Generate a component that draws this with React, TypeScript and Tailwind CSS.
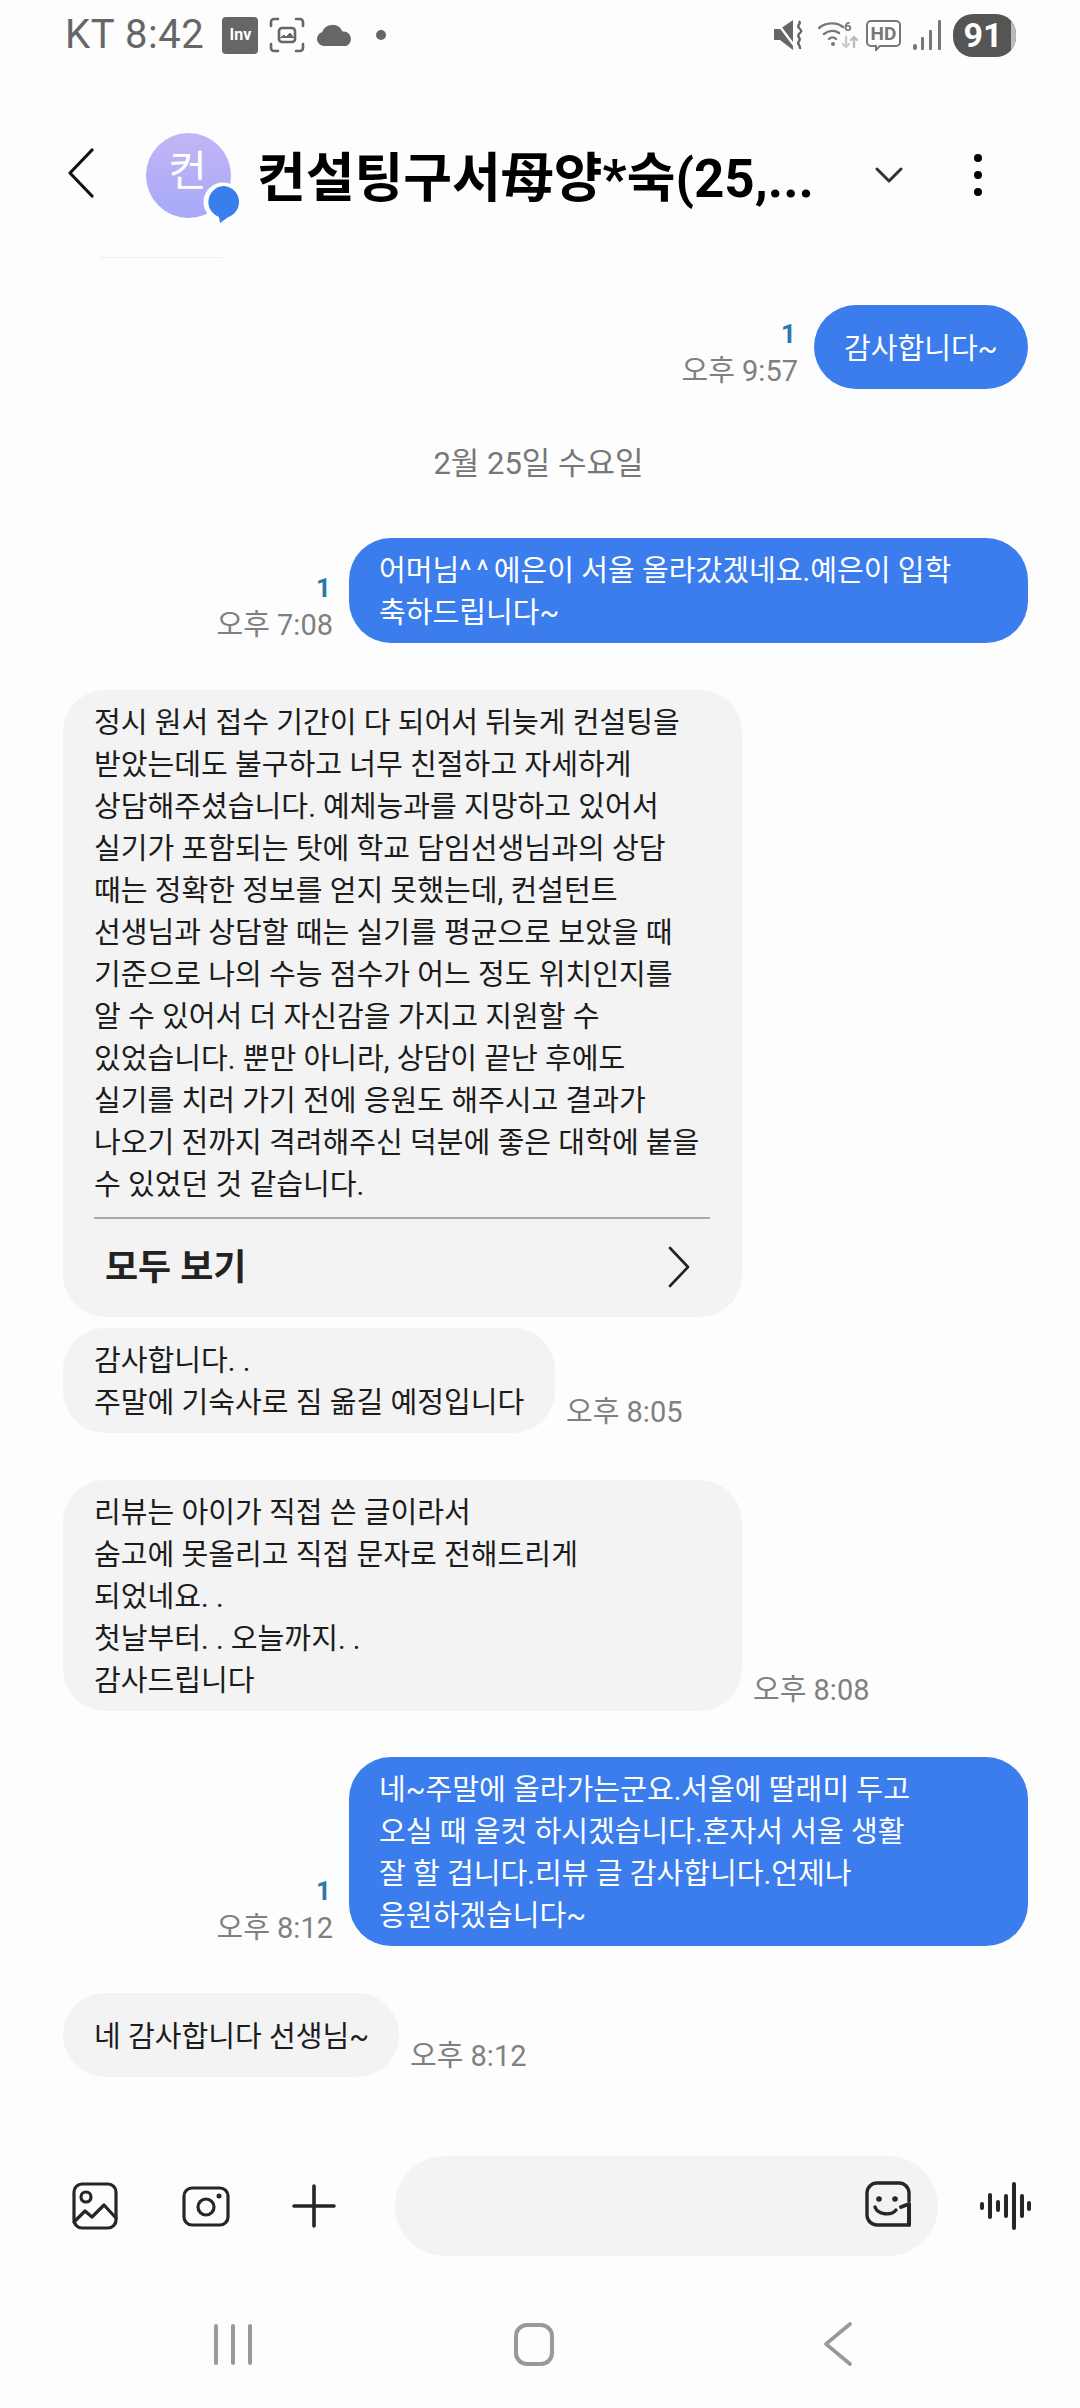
import React from 'react';

const FONT = "font-['Roboto','Noto_Sans_CJK_KR',sans-serif]";

function StatusBar() {
  return (
    <div className="h-[70px] flex items-center justify-between pl-[65px] pr-[64px] text-[#666666]">
      <div className="flex items-center">
        <span className="text-[40px] leading-none tracking-[0.6px]">KT 8:42</span>
        <div className="ml-[18px] w-[36px] h-[37px] rounded-[4px] bg-[#666666] flex items-center justify-center text-white text-[16px] font-bold leading-none">Inv</div>
        <svg className="ml-[11px]" width="36" height="36" viewBox="0 0 36 36" fill="none" stroke="#666666" strokeWidth="2.6" strokeLinecap="round">
          <path d="M2 9V5a3 3 0 0 1 3-3h4M27 2h4a3 3 0 0 1 3 3v4M34 27v4a3 3 0 0 1-3 3h-4M9 34H5a3 3 0 0 1-3-3v-4" />
          <rect x="10" y="11" width="16" height="14" rx="3" />
          <path d="M11 21l4-3 2 2 4-4 4 5" fill="#666666" strokeWidth="1" />
        </svg>
        <svg className="ml-[11px]" width="37" height="22" viewBox="0 0 37 22" fill="#666666">
          <path d="M8 22a7 7 0 0 1-2-13.7A11 11 0 0 1 26.5 7.5 7.5 7.5 0 0 1 30 22z" />
        </svg>
        <div className="ml-[23px] w-[10px] h-[10px] rounded-full bg-[#666666]" />
      </div>
      <div className="flex items-center">
        <svg width="30" height="30" viewBox="0 0 30 30" fill="#666666">
          <path d="M0 9h6L19 0v30L6 20H0a1 1 0 0 1 0-1z" />
          <path d="M1 0l21 28" stroke="#fdfdfd" strokeWidth="2.4" />
          <path d="M25 1c3 3-3 4 0 7s3 3 0 6 3 4 0 7 2 4 1 8" fill="none" stroke="#666666" strokeWidth="2.4" />
        </svg>
        <svg className="ml-[14px]" width="40" height="32" viewBox="0 0 40 32" fill="none" stroke="#777777" strokeWidth="2.4" strokeLinecap="round">
          <path d="M1 9c7-6 18-6 24-1M6 15c5-4 11-4 15-1M11 20c2-2 5-2 7 0" />
          <circle cx="15" cy="25" r="2" fill="#777777" stroke="none" />
          <path d="M28 18v10M25 25l3 3 3-3" stroke="#cccccc" />
          <path d="M36 28V18M33 21l3-3 3 3" stroke="#bbbbbb" />
          <text x="26" y="12" fontSize="13" fontWeight="700" fill="#777777" stroke="none">6</text>
        </svg>
        <svg className="ml-[8px]" width="35" height="31" viewBox="0 0 35 31" fill="none" stroke="#777777" strokeWidth="2">
          <path d="M5 1h25a4 4 0 0 1 4 4v17a4 4 0 0 1-4 4H14l-4 4v-4H5a4 4 0 0 1-4-4V5a4 4 0 0 1 4-4z" />
          <text x="17.5" y="20" textAnchor="middle" fontSize="19" fontWeight="700" fill="#777777" stroke="none">HD</text>
        </svg>
        <svg className="ml-[12px]" width="28" height="30" viewBox="0 0 28 30" fill="#777777">
          <rect x="0" y="24" width="4" height="6" rx="2" />
          <rect x="8" y="17" width="3" height="13" rx="1" />
          <rect x="16" y="10" width="3" height="20" rx="1" />
          <rect x="25" y="0" width="3" height="30" rx="1" />
        </svg>
        <div className="ml-[12px] w-[63px] h-[43px] rounded-[20px] overflow-hidden bg-[#555555] flex items-center justify-center relative">
          <span className="text-white text-[34px] font-bold leading-none pr-[3px]">91</span>
          <div className="absolute right-0 top-0 bottom-0 w-[5px] bg-[#bbbbbb]" />
        </div>
      </div>
    </div>
  );
}

function Header() {
  return (
    <div className="h-[146px] mt-[32px] flex items-center pl-[68px] relative">
      <svg width="26" height="50" viewBox="0 0 26 50" fill="none" stroke="#111111" strokeWidth="3.2" strokeLinecap="round" strokeLinejoin="round" className="mb-[4px]">
        <path d="M24 2L2 25l22 23" />
      </svg>
      <div className="ml-[52px] relative w-[85px] h-[85px] rounded-full bg-gradient-to-b from-[#c3b5f5] to-[#a6a9f8] flex items-center justify-center text-white text-[42px] leading-none pb-[6px] pr-[2px]">
        컨
        <svg className="absolute right-[-12px] bottom-[-8px]" width="40" height="44" viewBox="0 0 40 44" fill="#3a7dec">
          <circle cx="20" cy="20" r="19.5" fill="#ffffff" />
          <path d="M20 4a16 16 0 0 1 5 31.200L17 41l-1-6A16 16 0 0 1 20 4z" />
        </svg>
      </div>
      <div className="ml-[26px] w-[619px] text-[53px] font-bold leading-none text-black whitespace-nowrap mt-[8px]">컨설팅구서母양*숙(25,...</div>
      <svg className="ml-[-1px] mb-[1px]" width="28" height="18" viewBox="0 0 28 18" fill="none" stroke="#333333" strokeWidth="3" strokeLinecap="round" strokeLinejoin="round">
        <path d="M2 3l12 12L26 3" />
      </svg>
      <div className="ml-[71px] flex flex-col gap-[9px]">
        <div className="w-[8px] h-[8px] rounded-full bg-black" />
        <div className="w-[8px] h-[8px] rounded-full bg-black" />
        <div className="w-[8px] h-[8px] rounded-full bg-black" />
      </div>
    </div>
  );
}

function Lines({ lines }: { lines: React.ReactNode[] }) {
  return (
    <div className="text-[29.1px] leading-[42px] whitespace-pre">
      {lines.map((l, i) => (
        <div key={i}>{l}</div>
      ))}
    </div>
  );
}

function Sent({ lines, time, mt, width }: { lines: React.ReactNode[]; time: string; mt: string; width: string }) {
  return (
    <div className={`flex justify-end items-end pr-[52px] ${mt}`}>
      <div className="flex flex-col items-end mr-[16px] mb-[1px]">
        <span className="text-[26px] leading-[39px] font-bold text-[#2a78ad] mr-[2px]">1</span>
        <span className="text-[29px] leading-[34px] text-[#808080]">{time}</span>
      </div>
      <div className={`${width} min-h-[84px] flex items-center rounded-[42px] bg-[#3b7ded] text-white pl-[30px] pt-[12px] pb-[9px]`}>
        <Lines lines={lines} />
      </div>
    </div>
  );
}

function Received({ lines, time, mt, width }: { lines: string[]; time: string; mt: string; width: string }) {
  return (
    <div className={`flex items-end pl-[63px] ${mt}`}>
      <div className={`${width} min-h-[84px] flex items-center rounded-[42px] bg-[#f3f3f3] text-[#1c1c1c] pl-[31px] pt-[12px] pb-[9px]`}>
        <Lines lines={lines} />
      </div>
      <span className="ml-[11px] mb-[4px] text-[29px] leading-[34px] text-[#808080]">{time}</span>
    </div>
  );
}

function Chat() {
  return (
    <div className="flex-none">
      <div className="ml-[100px] mt-[9px] w-[122px] h-px bg-[#eeeeee]" />
      <Sent mt="mt-[47px]" width="w-[214px]" time="오후 9:57" lines={['감사합니다~']} />
      <div className="mt-[57px] text-center text-[31px] leading-[36px] text-[#777777] pr-[3px]">2월 25일 수요일</div>
      <Sent
        mt="mt-[56px]"
        width="w-[679px]"
        time="오후 7:08"
        lines={[
          <>
            어머님<span className="tracking-[5px]">^^</span>에은이 서울 올라갔겠네요.예은이 입학
          </>,
          '축하드립니다~',
        ]}
      />
      <div className="ml-[63px] mt-[47px] w-[679px] rounded-[42px] bg-[#f3f3f3] text-[#1c1c1c] pl-[31px] pr-[32px] pt-[12px]">
        <Lines
          lines={[
            '정시 원서 접수 기간이 다 되어서 뒤늦게 컨설팅을',
            '받았는데도 불구하고 너무 친절하고 자세하게',
            '상담해주셨습니다. 예체능과를 지망하고 있어서',
            '실기가 포함되는 탓에 학교 담임선생님과의 상담',
            '때는 정확한 정보를 얻지 못했는데, 컨설턴트',
            '선생님과 상담할 때는 실기를 평균으로 보았을 때',
            '기준으로 나의 수능 점수가 어느 정도 위치인지를',
            '알 수 있어서 더 자신감을 가지고 지원할 수',
            '있었습니다. 뿐만 아니라, 상담이 끝난 후에도',
            '실기를 치러 가기 전에 응원도 해주시고 결과가',
            '나오기 전까지 격려해주신 덕분에 좋은 대학에 붙을',
            '수 있었던 것 같습니다.',
          ]}
        />
        <div className="mt-[11px] h-[2px] bg-[#a8a8a8]" />
        <div className="h-[98px] flex items-center justify-between pl-[11px] pr-[20px]">
          <span className="text-[36px] font-bold leading-none text-[#222222]">모두 보기</span>
          <svg width="22" height="42" viewBox="0 0 22 42" fill="none" stroke="#222222" strokeWidth="2.6" strokeLinecap="round" strokeLinejoin="round" className="mb-[3px]">
            <path d="M2 2l18 19L2 40" />
          </svg>
        </div>
      </div>
      <Received mt="mt-[11px]" width="w-[492px]" time="오후 8:05" lines={['감사합니다. .', '주말에 기숙사로 짐 옮길 예정입니다']} />
      <Received
        mt="mt-[47px]"
        width="w-[679px]"
        time="오후 8:08"
        lines={['리뷰는 아이가 직접 쓴 글이라서', '숨고에 못올리고 직접 문자로 전해드리게', '되었네요. .', '첫날부터. . 오늘까지. .', '감사드립니다']}
      />
      <Sent
        mt="mt-[46px]"
        width="w-[679px]"
        time="오후 8:12"
        lines={['네~주말에 올라가는군요.서울에 딸래미 두고', '오실 때 울컷 하시겠습니다.혼자서 서울 생활', '잘 할 겁니다.리뷰 글 감사합니다.언제나', '응원하겠습니다~']}
      />
      <Received mt="mt-[47px]" width="w-[336px]" time="오후 8:12" lines={['네 감사합니다 선생님~']} />
    </div>
  );
}

function InputBar() {
  return (
    <div className="h-[100px] flex items-center pl-[72px]">
      <svg width="46" height="48" viewBox="0 0 46 48" fill="none" stroke="#262626" strokeWidth="3.2" strokeLinejoin="round" strokeLinecap="round">
        <rect x="2" y="2" width="42" height="44" rx="8" />
        <circle cx="14" cy="15" r="5" />
        <path d="M2 40l11-11 7 6 12-12 12 13" />
      </svg>
      <svg className="ml-[64px]" width="48" height="41" viewBox="0 0 48 41" fill="none" stroke="#262626" strokeWidth="3.2">
        <rect x="2" y="2" width="44" height="37" rx="8" />
        <circle cx="24" cy="21" r="8" />
        <circle cx="37" cy="10" r="2.5" fill="#262626" stroke="none" />
      </svg>
      <svg className="ml-[62px]" width="44" height="44" viewBox="0 0 44 44" fill="none" stroke="#262626" strokeWidth="3.6" strokeLinecap="round">
        <path d="M22 2v40M2 22h40" />
      </svg>
      <div className="ml-[59px] w-[543px] h-[100px] rounded-[50px] bg-[#f3f3f3] flex items-center justify-end pr-[27px]">
        <svg className="mb-[5px]" width="46" height="46" viewBox="0 0 46 46" fill="none" stroke="#262626" strokeWidth="3.4" strokeLinecap="round" strokeLinejoin="round">
          <path d="M44 20V12A10 10 0 0 0 34 2H12A10 10 0 0 0 2 12v22a10 10 0 0 0 10 10h30" />
          <circle cx="14" cy="18" r="2.8" fill="#262626" stroke="none" />
          <circle cx="30" cy="18" r="2.8" fill="#262626" stroke="none" />
          <path d="M10 26c3 8 16 9 21 3" />
          <path d="M36 26l8-3v21" strokeWidth="4" />
        </svg>
      </div>
      <svg className="ml-[42px]" width="51" height="48" viewBox="0 0 51 48" fill="#262626">
        <rect x="0" y="20" width="4" height="8" rx="2" />
        <rect x="8" y="11" width="4" height="26" rx="2" />
        <rect x="16" y="18" width="4" height="12" rx="2" />
        <rect x="24" y="12" width="4" height="24" rx="2" />
        <rect x="32" y="0" width="4" height="48" rx="2" />
        <rect x="40" y="12" width="4" height="24" rx="2" />
        <rect x="47" y="19" width="4" height="10" rx="2" />
      </svg>
    </div>
  );
}

function NavBar() {
  return (
    <div className="mt-[66px] flex items-center">
      <div className="ml-[214px] flex gap-[13px]">
        <div className="w-[4px] h-[41px] rounded-full bg-[#999999]" />
        <div className="w-[4px] h-[41px] rounded-full bg-[#999999]" />
        <div className="w-[4px] h-[41px] rounded-full bg-[#999999]" />
      </div>
      <div className="ml-[262px] w-[40px] h-[43px] rounded-[13px] border-[4px] border-[#999999]" />
      <svg className="ml-[270px]" width="28" height="44" viewBox="0 0 28 44" fill="none" stroke="#999999" strokeWidth="3.6" strokeLinecap="round" strokeLinejoin="round">
        <path d="M26 2L2 22l24 20" />
      </svg>
    </div>
  );
}

export default function App() {
  return (
    <div className={`w-[1080px] h-[2408px] overflow-hidden bg-[#fdfdfd] flex flex-col ${FONT}`}>
      <StatusBar />
      <Header />
      <div className="h-[1908px] flex-none overflow-hidden">
        <Chat />
      </div>
      <InputBar />
      <NavBar />
    </div>
  );
}
